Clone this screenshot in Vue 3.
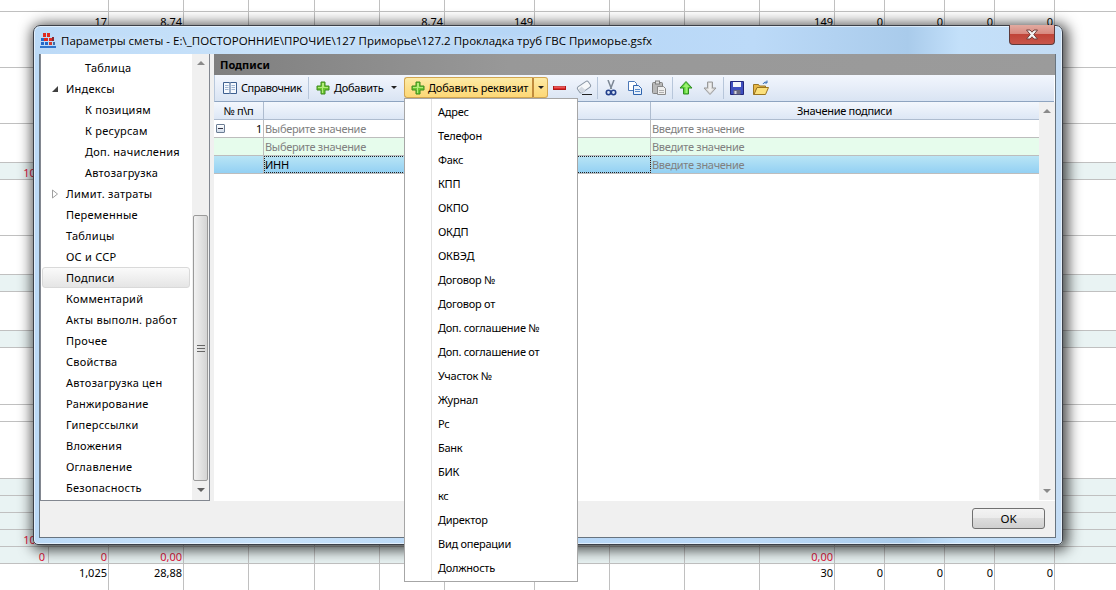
<script setup>
const sheetRows = [
  { h: 12, cells: {} },
  { h: 56, cells: { 1: '17', 2: '8,74', 6: '8,74', 7: '149', 11: '149', 12: '0', 13: '0', 14: '0', 15: '0' } },
  { h: 56, cells: {} },
  { h: 39, cells: {} },
  { h: 17, tint: true, red: true, cells: { 0: '100,' } },
  { h: 56, cells: {} },
  { h: 39, cells: {} },
  { h: 17, tint: true, cells: {} },
  { h: 39, cells: {} },
  { h: 17, tint: true, cells: {} },
  { h: 57, cells: {} },
  { h: 17, cells: {} },
  { h: 57, cells: {} },
  { h: 17, tint: true, cells: {} },
  { h: 17, tint: true, cells: {} },
  { h: 17, tint: true, red: true, cells: { 0: '50' } },
  { h: 17, tint: true, red: true, cells: { 0: '102,' } },
  { h: 17, tint: true, red: true, divided: true, cells: { 0: '0', 1: '0', 2: '0,00', 11: '0,00' } },
  { h: 27, last: true, cells: { 1: '1,025', 2: '28,88', 11: '30', 12: '0', 13: '0', 14: '0', 15: '0' } }
]
const columns = Array.from({ length: 17 }, (_, i) => i)

const tree = [
  { t: 'Таблица', l: 2 },
  { t: 'Индексы', l: 1, open: true },
  { t: 'К позициям', l: 2 },
  { t: 'К ресурсам', l: 2 },
  { t: 'Доп. начисления', l: 2 },
  { t: 'Автозагрузка', l: 2 },
  { t: 'Лимит. затраты', l: 1, closed: true },
  { t: 'Переменные', l: 1 },
  { t: 'Таблицы', l: 1 },
  { t: 'ОС и ССР', l: 1 },
  { t: 'Подписи', l: 1, sel: true },
  { t: 'Комментарий', l: 1 },
  { t: 'Акты выполн. работ', l: 1 },
  { t: 'Прочее', l: 1 },
  { t: 'Свойства', l: 1 },
  { t: 'Автозагрузка цен', l: 1 },
  { t: 'Ранжирование', l: 1 },
  { t: 'Гиперссылки', l: 1 },
  { t: 'Вложения', l: 1 },
  { t: 'Оглавление', l: 1 },
  { t: 'Безопасность', l: 1 }
]

const menu = ['Адрес', 'Телефон', 'Факс', 'КПП', 'ОКПО', 'ОКДП', 'ОКВЭД', 'Договор №', 'Договор от', 'Доп. соглашение №', 'Доп. соглашение от', 'Участок №', 'Журнал', 'Рс', 'Банк', 'БИК', 'кс', 'Директор', 'Вид операции', 'Должность']
</script>

<template>
  <div class="screen">
    <div class="sheet">
      <div
        v-for="(row, r) in sheetRows"
        :key="r"
        class="srow"
        :class="{ tint: row.tint, red: row.red, last: row.last, divided: row.divided }"
        :style="{ height: row.h + 'px' }"
      >
        <div v-for="c in columns" :key="c" class="scell">{{ row.cells[c] }}</div>
      </div>
    </div>

    <div class="window">
      <div class="titlebar">
        <svg class="appicon" width="16" height="15" viewBox="0 0 16 15">
          <rect x="3" y="0" width="3" height="4" fill="#e02a20" />
          <rect x="7" y="0" width="3" height="4" fill="#e02a20" />
          <rect x="1" y="5" width="3" height="3" fill="#2468c8" />
          <rect x="4" y="5" width="4" height="3" fill="#e02a20" />
          <rect x="9" y="5" width="3" height="3" fill="#e02a20" />
          <rect x="12" y="4" width="2" height="4" fill="#8a2a30" />
          <rect x="1" y="9" width="3" height="3" fill="#2468c8" />
          <rect x="5" y="9" width="3" height="3" fill="#2468c8" />
          <rect x="9" y="9" width="3" height="3" fill="#d03a2e" />
          <rect x="13" y="9" width="2" height="3" fill="#3a6aa8" />
          <rect x="0" y="13" width="16" height="2" fill="#2f74cc" />
        </svg>
        <span class="title">Параметры сметы - E:\_ПОСТОРОННИЕ\ПРОЧИЕ\127 Приморье\127.2 Прокладка труб ГВС Приморье.gsfx</span>
        <div class="close">
          <svg width="14" height="11" viewBox="0 0 14 11">
            <path d="M1.500 1H5L7 3.200 9 1h3.500L8.800 5.500l3.700 4.500H9L7 7.800 5 10H1.500l3.700-4.500z" fill="#f4f4f4" stroke="#70403c" stroke-width="1" />
          </svg>
        </div>
      </div>

      <div class="client">
        <div class="main">
          <aside class="navpanel">
            <div class="tree">
              <div v-for="item in tree" :key="item.t" class="node" :class="{ sel: item.sel, sub: item.l === 2 }">
                <span class="slot">
                  <svg v-if="item.open" width="8" height="8" viewBox="0 0 8 8"><path d="M7 1v6H1z" fill="#404040" /></svg>
                  <svg v-if="item.closed" width="8" height="10" viewBox="0 0 8 10"><path d="M1.500 1l5 4-5 4z" fill="#fff" stroke="#a0a0a0" /></svg>
                </span>
                <span class="nodetext">{{ item.t }}</span>
              </div>
            </div>
            <div class="vscroll nav">
              <div class="sbtn"><span class="up"></span></div>
              <div class="thumb">
                <svg width="8" height="7" viewBox="0 0 8 7"><path d="M0 .5h8M0 3.500h8M0 6.500h8" stroke="#666" /></svg>
              </div>
              <div class="sbtn down"><span class="dn"></span></div>
            </div>
          </aside>

          <section class="content">
            <div class="sectionhead">Подписи</div>
            <div class="toolbar">
              <div class="tbtext book">
                <svg width="16" height="16" viewBox="0 0 16 16">
                  <path d="M1.500 2.500h6l.5 1 .5-1h6v11h-6l-.5.5-.5-.5h-6z" fill="#f4f8fd" stroke="#3d5f8f" />
                  <path d="M8 3.500v10" stroke="#3d5f8f" />
                  <path d="M3 5.500h3.500M3 7.500h3.500M3 9.500h3.500M9.500 5.500H13M9.500 7.500H13M9.500 9.500H13" stroke="#9db4d2" />
                </svg>
                <span>Справочник</span>
              </div>
              <i class="sep"></i>
              <div class="tbtext add">
                <svg width="16" height="16" viewBox="0 0 16 16">
                  <path d="M6 2h4v4h4v4h-4v4H6v-4H2V6h4z" fill="#6cc832" stroke="#3f8a1e" />
                  <path d="M7 3h2v4h4v1H8v5H7V8H3V7h4z" fill="#b4ec7c" />
                </svg>
                <span>Добавить</span>
                <b class="caret"></b>
              </div>
              <div class="splitbtn">
                <div class="splitmain">
                  <svg width="16" height="16" viewBox="0 0 16 16">
                    <path d="M6 2h4v4h4v4h-4v4H6v-4H2V6h4z" fill="#6cc832" stroke="#3f8a1e" />
                    <path d="M7 3h2v4h4v1H8v5H7V8H3V7h4z" fill="#b4ec7c" />
                  </svg>
                  <span>Добавить реквизит</span>
                </div>
                <div class="splitarrow"><b class="caret"></b></div>
              </div>
              <div class="tbicon">
                <svg width="16" height="16" viewBox="0 0 16 16"><rect x="1.500" y="6.500" width="12" height="3" fill="#e02828" stroke="#b01818" /><path d="M2 7h11" stroke="#f08080" /></svg>
              </div>
              <div class="tbicon">
                <svg width="16" height="16" viewBox="0 0 16 16">
                  <rect x="1.500" y="3.500" width="13" height="7" rx="2" transform="rotate(-35 8 7)" fill="#f6f8fa" stroke="#8a96a4" />
                  <path d="M2.500 9.500l3 3.500 2.500-1 1.500-2-4-3.500z" fill="#d4dae2" />
                  <path d="M6 14.500h10" stroke="#222" />
                </svg>
              </div>
              <i class="sep"></i>
              <div class="tbicon">
                <svg width="16" height="16" viewBox="0 0 16 16">
                  <path d="M5 0l3.500 9M11 0L7.500 9" stroke="#7c8794" stroke-width="1.500" fill="none" />
                  <circle cx="5.500" cy="12.500" r="2.200" fill="#d8e4f4" stroke="#24408c" stroke-width="1.600" />
                  <circle cx="10.500" cy="12.500" r="2.200" fill="#d8e4f4" stroke="#24408c" stroke-width="1.600" />
                </svg>
              </div>
              <div class="tbicon">
                <svg width="16" height="16" viewBox="0 0 16 16">
                  <path d="M1.500 1.500h6l2 2v7h-8z" fill="#fff" stroke="#4b78b8" />
                  <path d="M6.500 5.500h5l3 3v6h-8z" fill="#e8f1fb" stroke="#2f64ae" />
                  <path d="M8 9.500h5M8 11.500h5" stroke="#5b8ccc" />
                </svg>
              </div>
              <div class="tbicon">
                <svg width="16" height="16" viewBox="0 0 16 16">
                  <rect x="1.500" y="2.500" width="10" height="11" rx="1" fill="#b8b8b8" stroke="#808080" />
                  <rect x="4.500" y="1" width="4" height="3" fill="#e0e0e0" stroke="#808080" />
                  <path d="M6.500 6.500h6l2 2v6h-8z" fill="#eeeeee" stroke="#8a8a8a" />
                  <path d="M8 10.500h5M8 12.500h5" stroke="#b0b0b0" />
                </svg>
              </div>
              <i class="sep"></i>
              <div class="tbicon">
                <svg width="16" height="16" viewBox="0 0 16 16">
                  <path d="M8 1.500l6 6.500h-3.500v6h-5V8H2z" fill="#5cd43a" stroke="#2f8c20" />
                  <path d="M8 3l3.500 4H9.500v6h-2V7H5z" fill="#9cf070" />
                </svg>
              </div>
              <div class="tbicon">
                <svg width="16" height="16" viewBox="0 0 16 16">
                  <path d="M8 14.500L2 8h3.500V2h5v6H14z" fill="#d8d8d8" stroke="#9a9a9a" />
                  <path d="M7 3h2v6h2l-3 3.500L5 9h2z" fill="#eeeeee" />
                </svg>
              </div>
              <i class="sep"></i>
              <div class="tbicon">
                <svg width="16" height="16" viewBox="0 0 16 16">
                  <path d="M1.500 1.500h13v13h-13z" fill="#3f4fc0" stroke="#22267a" />
                  <rect x="4" y="2" width="8" height="5" fill="#f4f6fa" />
                  <rect x="4.500" y="10" width="7" height="4.500" fill="#6a6a80" />
                  <rect x="5.500" y="11" width="2" height="3" fill="#d8d8e4" />
                </svg>
              </div>
              <div class="tbicon">
                <svg width="16" height="16" viewBox="0 0 16 16">
                  <path d="M.5 4.500h5l1 1.500h6v2H4l-2.500 6.500H.5z" fill="#e8b848" stroke="#9a7420" />
                  <path d="M4 7.500h11.500l-3 7H1z" fill="#fbe07c" stroke="#9a7420" />
                  <path d="M10 4c1-2 3-2.500 4-1.500M14 .5v2.500h-2.500" fill="none" stroke="#3a70b8" />
                </svg>
              </div>
            </div>
            <div class="tablewrap">
              <div class="table">
                <div class="thead grow">
                  <div class="th">№ п\п</div>
                  <div class="th"></div>
                  <div class="th last">Значение подписи</div>
                </div>
                <div class="grow trow">
                  <div class="td num"><span class="minus"></span><span>1</span></div>
                  <div class="td hint">Выберите значение</div>
                  <div class="td hint">Введите значение</div>
                </div>
                <div class="grow trow newrow">
                  <div class="td"></div>
                  <div class="td hint">Выберите значение</div>
                  <div class="td hint">Введите значение</div>
                </div>
                <div class="grow trow current">
                  <div class="td"></div>
                  <div class="td focus">ИНН</div>
                  <div class="td hint">Введите значение</div>
                </div>
              </div>
              <div class="vscroll grid">
                <div class="sbtn"><span class="up"></span></div>
                <div class="sbtn down"><span class="dn"></span></div>
              </div>
            </div>
          </section>
        </div>
        <div class="footer">
          <div class="okbtn">OK</div>
        </div>
      </div>
    </div>

    <div class="menu">
      <div v-for="m in menu" :key="m" class="mitem">{{ m }}</div>
    </div>
  </div>
</template>

<style scoped>
.screen {
  position: relative;
  width: 1116px;
  height: 590px;
  overflow: hidden;
  background: #fff;
  font-family: "Noto Sans", "Liberation Sans", sans-serif;
  font-size: 11px;
  color: #000;
}

.srow {
  display: grid;
  grid-template-columns: 49px 60px 75px 65px 66px 65px 65px 90px 75px 75px 75px 75px 50px 60px 50px 60px 62px;
  border-bottom: 1px solid #c0c0c0;
  box-sizing: border-box;
}
.srow.last { border-bottom: 0; }
.srow.tint { background: #e9f3f3; }
.srow.red { color: #e0143c; }
.scell {
  box-sizing: border-box;
  text-align: right;
  padding: 2px 1px 0 0;
  line-height: 15px;
  border-right: 1px solid #c0c0c0;
}
.scell:first-child { border-right-color: transparent; padding-right: 3px; }
.srow.divided .scell:first-child { border-right-color: #c0c0c0; }
.srow.last .scell { padding-top: 1px; }
.scell:last-child { border-right: 0; }

.window {
  position: absolute;
  left: 33px;
  top: 25px;
  width: 1030px;
  height: 520px;
  box-sizing: border-box;
  border: 1px solid #3c4048;
  border-radius: 7px 7px 5px 5px;
  display: flex;
  flex-direction: column;
  padding: 0 6px 6px 5px;
  background: linear-gradient(90deg, #bcdaf7 0%, #c8e2fa 22%, #b6d6f6 45%, #bcdaf8 70%, #a9cbeb 85%, #c3e0fa 90%, #c4dcf4 100%);
  box-shadow: 2px 2px 14px 3px rgba(0, 0, 0, .72), inset 0 0 0 1px rgba(255, 255, 255, .55);
}

.titlebar {
  position: relative;
  height: 28px;
  flex: none;
  display: flex;
  align-items: center;
}
.appicon { margin-left: 1px; flex: none; }
.title {
  margin-left: 5px;
  font-family: "Open Sans", sans-serif;
  font-size: 11.500px;
  letter-spacing: .02px;
  white-space: nowrap;
  text-shadow: 0 0 6px rgba(255, 255, 255, .9);
}
.close {
  position: absolute;
  right: 1px;
  top: -1px;
  width: 46px;
  height: 20px;
  box-sizing: border-box;
  border: 1px solid #5e3a3a;
  border-top: 0;
  border-radius: 0 0 4px 4px;
  background: linear-gradient(180deg, #e2aaa0 0%, #d88a80 45%, #c04438 50%, #c8564a 100%);
  display: flex;
  align-items: center;
  justify-content: center;
}

.client {
  flex: 1;
  min-height: 0;
  display: flex;
  flex-direction: column;
  border: 1px solid #68747f;
  border-top: 0;
  background: #f0f0f0;
}
.main { height: 447px; flex: none; display: flex; gap: 4px; }
.footer {
  flex: 1;
  display: flex;
  justify-content: flex-end;
  align-items: flex-start;
  padding: 7px 10px 0 0;
}
.okbtn {
  width: 73px;
  height: 21px;
  box-sizing: border-box;
  border: 1px solid #707070;
  border-radius: 3px;
  text-align: center;
  line-height: 19px;
  font-size: 11.500px;
  background: linear-gradient(180deg, #f3f3f3 0%, #ebebeb 48%, #dddddd 50%, #cfcfcf 100%);
}

.navpanel {
  width: 170px;
  flex: none;
  box-sizing: border-box;
  display: flex;
  border: 1px solid #828790;
  border-top: 0;
  background: #fff;
}
.tree { width: 151px; flex: none; padding-top: 3px; box-sizing: border-box; }
.node {
  box-sizing: border-box;
  height: 21px;
  margin-left: 1px;
  width: 148px;
  border: 1px solid transparent;
  border-radius: 3px;
  display: flex;
  align-items: center;
  padding-left: 8px;
}
.node.sel {
  border-color: #d9d9d9;
  background: linear-gradient(180deg, #fafafa, #e5e5e5);
}
.slot { width: 15px; flex: none; display: flex; align-items: center; }
.node.sub .nodetext { margin-left: 19px; }
.nodetext { white-space: nowrap; letter-spacing: .25px; }

.vscroll {
  width: 17px;
  flex: none;
  box-sizing: border-box;
  background: #f0f0f0;
  display: flex;
  flex-direction: column;
  align-items: center;
}
.vscroll.grid { width: 16px; justify-content: space-between; height: 398px; }
.sbtn {
  height: 18px;
  width: 100%;
  flex: none;
  display: flex;
  align-items: center;
  justify-content: center;
}
.sbtn .up {
  width: 0;
  height: 0;
  border-left: 4px solid transparent;
  border-right: 4px solid transparent;
  border-bottom: 4px solid #8a8a8a;
}
.sbtn .dn {
  width: 0;
  height: 0;
  border-left: 4px solid transparent;
  border-right: 4px solid transparent;
  border-top: 4px solid #606060;
}
.vscroll.grid .dn { border-top-color: #8a8a8a; }
.thumb {
  margin-top: 143px;
  width: 15px;
  height: 266px;
  flex: none;
  box-sizing: border-box;
  border: 1px solid #9a9a9a;
  border-radius: 2px;
  background: linear-gradient(90deg, #f2f2f2, #d4d4d4);
  display: flex;
  align-items: center;
  justify-content: center;
}

.content {
  flex: 1;
  min-width: 0;
  display: flex;
  flex-direction: column;
  background: #fff;
}
.sectionhead {
  height: 21px;
  flex: none;
  box-sizing: border-box;
  padding-left: 6px;
  line-height: 21px;
  font-weight: 700;
  background: linear-gradient(90deg, #7f7f7f 0%, #989898 35%, #9b9b9b 100%);
}
.toolbar {
  height: 27px;
  flex: none;
  box-sizing: border-box;
  display: flex;
  align-items: flex-start;
  padding: 2px 0 0 7px;
  margin-right: 1px;
  border-bottom: 1px solid #8ea4c0;
  border-left: 1px solid #b8c8dc;
  background: linear-gradient(180deg, #f2f6fd 0%, #e6edf8 50%, #d9e4f3 100%);
  letter-spacing: -.25px;
}
.toolbar svg { flex: none; }
.tbtext {
  height: 21px;
  display: flex;
  align-items: center;
  white-space: nowrap;
  box-sizing: border-box;
}
.book { width: 85px; gap: 3px; letter-spacing: -.45px; }
.add { width: 94px; padding-left: 5px; gap: 3px; }
.add .caret { margin-left: 5px; }
.caret {
  width: 0;
  height: 0;
  display: block;
  border-left: 3px solid transparent;
  border-right: 3px solid transparent;
  border-top: 3px solid #222;
}
.sep {
  display: block;
  flex: none;
  width: 1px;
  height: 22px;
  margin: 0 1px;
  background: #b7c6da;
}
.splitbtn { display: flex; height: 21px; width: 144px; flex: none; }
.splitmain {
  width: 128px;
  box-sizing: border-box;
  display: flex;
  align-items: center;
  gap: 2px;
  padding-left: 5px;
  white-space: nowrap;
  letter-spacing: -.17px;
  border: 1px solid #d2a650;
  border-right: 0;
  border-radius: 3px 0 0 3px;
  background: linear-gradient(180deg, #fdeba6 0%, #fde08c 50%, #fdd877 100%);
}
.splitarrow {
  width: 16px;
  box-sizing: border-box;
  display: flex;
  align-items: center;
  justify-content: center;
  border: 1px solid #d2a650;
  border-left: 2px solid #c08b3c;
  border-radius: 0 3px 3px 0;
  background: linear-gradient(180deg, #fdeba6 0%, #fde08c 50%, #fdd877 100%);
}
.tbicon {
  width: 24px;
  height: 21px;
  flex: none;
  display: flex;
  align-items: center;
  justify-content: center;
}

.tablewrap { flex: 1; min-height: 0; display: flex; }
.table { width: 825px; flex: none; letter-spacing: -.3px; }
.grow {
  display: grid;
  grid-template-columns: 50px 387px 388px;
}
.thead {
  height: 18px;
  box-sizing: border-box;
  border-bottom: 1px solid #aebccf;
  background: linear-gradient(180deg, #f3f7fd, #dde7f5);
}
.th {
  box-sizing: border-box;
  text-align: center;
  line-height: 17px;
  border-right: 1px solid #aebccf;
}
.th.last { border-right-color: transparent; }
.trow {
  height: 18px;
  box-sizing: border-box;
  border-bottom: 1px solid #bdbdbd;
}
.td {
  box-sizing: border-box;
  line-height: 17px;
  padding-left: 1px;
  border-right: 1px solid #bdbdbd;
  white-space: nowrap;
  overflow: hidden;
}
.td:last-child { border-right-color: transparent; }
.td.hint { color: #808080; }
.td.num {
  display: flex;
  align-items: center;
  justify-content: space-between;
  padding: 0 1px 0 2px;
}
.minus {
  width: 9px;
  height: 9px;
  box-sizing: border-box;
  border: 1px solid #6b7d94;
  border-radius: 1px;
  background: linear-gradient(#fff, #d0dcea);
  position: relative;
}
.minus::after {
  content: "";
  position: absolute;
  left: 1px;
  right: 1px;
  top: 3px;
  height: 1px;
  background: #334;
}
.newrow { background: #e6fcec; }
.current { background: linear-gradient(180deg, #b9e5f5, #93d0f3); }
.focus { outline: 1px dotted #222; outline-offset: -1px; }

.menu {
  position: absolute;
  left: 404px;
  top: 98px;
  width: 174px;
  height: 484px;
  box-sizing: border-box;
  border: 1px solid #a6a6a6;
  background: #fff;
  padding-top: 1px;
  letter-spacing: -.25px;
}
.menu::before {
  content: "";
  position: absolute;
  left: 26px;
  top: 0;
  bottom: 1px;
  width: 1px;
  background: #e2e2e2;
}
.mitem {
  height: 24px;
  line-height: 24px;
  padding-left: 33px;
  white-space: nowrap;
}
</style>
